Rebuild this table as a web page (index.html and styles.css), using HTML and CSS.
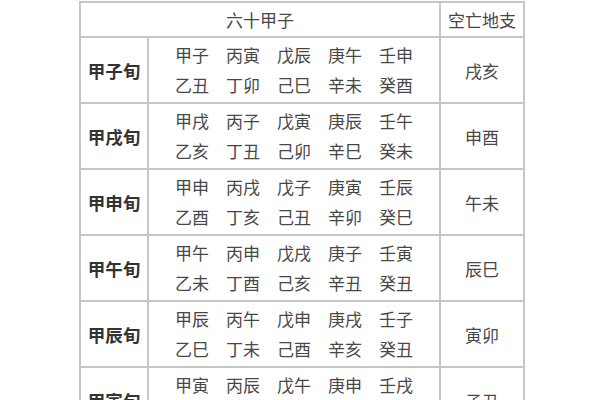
FILE: index.html
```html
<!DOCTYPE html>
<html lang="zh">
<head>
<meta charset="utf-8">
<link rel="stylesheet" href="styles.css">
</head>
<body>
<table class="jz">
  <colgroup>
    <col class="c1">
    <col class="c2">
    <col class="c3">
  </colgroup>
  <tr class="head">
    <td colspan="2">六十甲子</td>
    <td>空亡地支</td>
  </tr>
  <tr>
    <td class="xun">甲子旬</td>
    <td class="list"><div class="line"><span>甲子</span><span>丙寅</span><span>戊辰</span><span>庚午</span><span>壬申</span></div><div class="line"><span>乙丑</span><span>丁卯</span><span>己巳</span><span>辛未</span><span>癸酉</span></div></td>
    <td class="kong">戌亥</td>
  </tr>
  <tr>
    <td class="xun">甲戌旬</td>
    <td class="list"><div class="line"><span>甲戌</span><span>丙子</span><span>戊寅</span><span>庚辰</span><span>壬午</span></div><div class="line"><span>乙亥</span><span>丁丑</span><span>己卯</span><span>辛巳</span><span>癸未</span></div></td>
    <td class="kong">申酉</td>
  </tr>
  <tr>
    <td class="xun">甲申旬</td>
    <td class="list"><div class="line"><span>甲申</span><span>丙戌</span><span>戊子</span><span>庚寅</span><span>壬辰</span></div><div class="line"><span>乙酉</span><span>丁亥</span><span>己丑</span><span>辛卯</span><span>癸巳</span></div></td>
    <td class="kong">午未</td>
  </tr>
  <tr>
    <td class="xun">甲午旬</td>
    <td class="list"><div class="line"><span>甲午</span><span>丙申</span><span>戊戌</span><span>庚子</span><span>壬寅</span></div><div class="line"><span>乙未</span><span>丁酉</span><span>己亥</span><span>辛丑</span><span>癸丑</span></div></td>
    <td class="kong">辰巳</td>
  </tr>
  <tr>
    <td class="xun">甲辰旬</td>
    <td class="list"><div class="line"><span>甲辰</span><span>丙午</span><span>戊申</span><span>庚戌</span><span>壬子</span></div><div class="line"><span>乙巳</span><span>丁未</span><span>己酉</span><span>辛亥</span><span>癸丑</span></div></td>
    <td class="kong">寅卯</td>
  </tr>
  <tr>
    <td class="xun">甲寅旬</td>
    <td class="list"><div class="line"><span>甲寅</span><span>丙辰</span><span>戊午</span><span>庚申</span><span>壬戌</span></div><div class="line"><span>乙卯</span><span>丁巳</span><span>己未</span><span>辛酉</span><span>癸亥</span></div></td>
    <td class="kong">子丑</td>
  </tr>
</table>
</body>
</html>
```
FILE: styles.css
```css
html, body {
  margin: 0;
  padding: 0;
  background: #ffffff;
}
body {
  font-family: "Noto Sans CJK SC", "Noto Sans", sans-serif;
  color: #474747;
  font-size: 17px;
  overflow: hidden;
}
.jz {
  border-collapse: collapse;
  margin: 1px 0 0 79px;
  table-layout: fixed;
  width: 444px;
}
.c1 { width: 68px; }
.c2 { width: 292px; }
.c3 { width: 84px; }
.jz td {
  border: 2px solid #c6c6c6;
  padding: 0;
  text-align: center;
  vertical-align: middle;
  white-space: nowrap;
}
.head td {
  height: 33px;
  line-height: 33px;
}
.xun {
  height: 64px;
  font-weight: bold;
  color: #333333;
  font-size: 17.5px;
}
.line {
  display: flex;
  justify-content: center;
  gap: 17px;
  line-height: 30px;
}
.line span {
  white-space: nowrap;
}
```
